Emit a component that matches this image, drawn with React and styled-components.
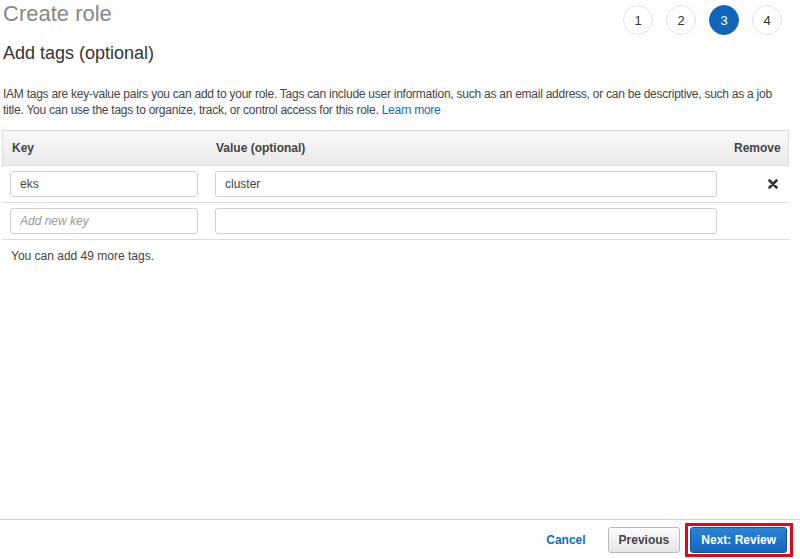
import React from 'react';
import styled, { createGlobalStyle } from 'styled-components';

const GlobalStyle = createGlobalStyle`
  html, body {
    margin: 0;
    padding: 0;
    background: #fff;
  }
  body {
    font-family: 'Liberation Sans', Arial, sans-serif;
    font-size: 12px;
    color: #444;
  }
`;

const Page = styled.div`
  display: flex;
  flex-direction: column;
  height: 100vh;
`;

const Main = styled.div`
  flex: 1;
  padding: 1px 11px 0 3px;
`;

const HeaderRow = styled.div`
  display: flex;
  justify-content: space-between;
  align-items: flex-start;
`;

const PageTitle = styled.h1`
  margin: 0;
  font-size: 22px;
  font-weight: normal;
  line-height: 25px;
  color: #878787;
`;

const Steps = styled.div`
  display: flex;
  gap: 13px;
  margin-top: 4px;
  margin-right: 7px;
`;

const Step = styled.div`
  width: 28px;
  height: 28px;
  border-radius: 50%;
  border: 1px solid ${(p) => (p.$active ? '#1166bb' : '#e2e2e2')};
  background: ${(p) => (p.$active ? '#1166bb' : '#fff')};
  color: ${(p) => (p.$active ? '#fff' : '#333')};
  display: flex;
  align-items: center;
  justify-content: center;
  font-size: 13px;
`;

const SectionTitle = styled.h2`
  margin: 8px 0 0;
  font-size: 18px;
  font-weight: normal;
  line-height: 21px;
  color: #333;
`;

const Intro = styled.p`
  margin: 22px 0 0;
  line-height: 16px;
  letter-spacing: -0.25px;
  color: #444;
`;

const Link = styled.a`
  color: #0a6ebd;
  text-decoration: none;
`;

const TagTable = styled.div`
  margin: 12px 0 0 -1px;
  width: 787px;
`;

const HeadRow = styled.div`
  display: grid;
  grid-template-columns: 204px 1fr 62px;
  height: 34px;
  align-items: center;
  background: linear-gradient(#f9f9f9, #e9e9e9);
  border: 1px solid #dcdcdc;
  font-weight: bold;
  color: #444;
`;

const HeadCell = styled.div`
  padding: 0 ${(p) => (p.$right ? '8px' : '9px')};
  text-align: ${(p) => (p.$right ? 'right' : 'left')};
`;

const TagRow = styled.div`
  display: grid;
  grid-template-columns: 204px 1fr 62px;
  height: 36px;
  align-items: center;
  border-bottom: 1px solid #dcdcdc;
`;

const Cell = styled.div`
  padding: 0 ${(p) => (p.$key ? '8px' : '10px 0 9px')};
  display: flex;
  justify-content: ${(p) => (p.$center ? 'center' : 'stretch')};
`;

const TextInput = styled.input`
  box-sizing: border-box;
  width: 100%;
  height: 26px;
  border: 1px solid #cfcfcf;
  border-radius: 3px;
  padding: 0 9px;
  font-family: 'Liberation Sans', Arial, sans-serif;
  font-size: 12px;
  color: #444;
  outline: none;
  &::placeholder {
    color: #9a9a9a;
    font-style: italic;
  }
`;

const RemoveButton = styled.button`
  border: none;
  background: none;
  padding: 0;
  margin-left: 30px;
  display: flex;
  cursor: pointer;
`;

const Note = styled.div`
  margin-top: 8px;
  padding-left: 8px;
  line-height: 16px;
`;

const Footer = styled.div`
  height: 39px;
  border-top: 1px solid #d5d5d5;
  display: flex;
  justify-content: flex-end;
  align-items: center;
  padding-right: 7px;
`;

const CancelLink = styled.a`
  color: #0a6ebd;
  font-weight: bold;
  text-decoration: none;
  margin-right: 22px;
`;

const Button = styled.button`
  height: 26px;
  padding: 0 10px;
  border-radius: 3px;
  font-family: 'Liberation Sans', Arial, sans-serif;
  font-size: 12px;
  font-weight: bold;
  cursor: pointer;
  border: 1px solid ${(p) => (p.$primary ? '#0d57a3' : '#b9b9b9')};
  background: ${(p) =>
    p.$primary ? 'linear-gradient(#2a84d6, #1466bd)' : 'linear-gradient(#fdfdfd, #e5e5e5)'};
  color: ${(p) => (p.$primary ? '#fff' : '#444')};
`;

const Highlight = styled.span`
  display: flex;
  margin-left: 5px;
  padding: 1px 3px 1px 2px;
  border: 3px solid #e3051b;
`;

const CloseIcon = () => (
  <svg width="10" height="10" viewBox="0 0 10 10">
    <path d="M1.5 1.5 L8.5 8.5 M8.5 1.5 L1.5 8.5" stroke="#333" strokeWidth="2.6" strokeLinecap="round" />
  </svg>
);

const steps = [1, 2, 3, 4];

export default function App() {
  return (
    <Page>
      <GlobalStyle />
      <Main>
        <HeaderRow>
          <PageTitle>Create role</PageTitle>
          <Steps>
            {steps.map((n) => (
              <Step key={n} $active={n === 3}>
                {n}
              </Step>
            ))}
          </Steps>
        </HeaderRow>
        <SectionTitle>Add tags (optional)</SectionTitle>
        <Intro>
          IAM tags are key-value pairs you can add to your role. Tags can include user information, such as
          an email address, or can be descriptive, such as a job title. You can use the tags to organize,
          track, or control access for this role. <Link href="#">Learn more</Link>
        </Intro>

        <TagTable>
          <HeadRow>
            <HeadCell>Key</HeadCell>
            <HeadCell>Value (optional)</HeadCell>
            <HeadCell $right>Remove</HeadCell>
          </HeadRow>
          <TagRow>
            <Cell $key>
              <TextInput defaultValue="eks" />
            </Cell>
            <Cell>
              <TextInput defaultValue="cluster" />
            </Cell>
            <Cell $center>
              <RemoveButton aria-label="Remove">
                <CloseIcon />
              </RemoveButton>
            </Cell>
          </TagRow>
          <TagRow>
            <Cell $key>
              <TextInput placeholder="Add new key" />
            </Cell>
            <Cell>
              <TextInput />
            </Cell>
            <Cell />
          </TagRow>
        </TagTable>
        <Note>You can add 49 more tags.</Note>
      </Main>

      <Footer>
        <CancelLink href="#">Cancel</CancelLink>
        <Button>Previous</Button>
        <Highlight>
          <Button $primary>Next: Review</Button>
        </Highlight>
      </Footer>
    </Page>
  );
}
